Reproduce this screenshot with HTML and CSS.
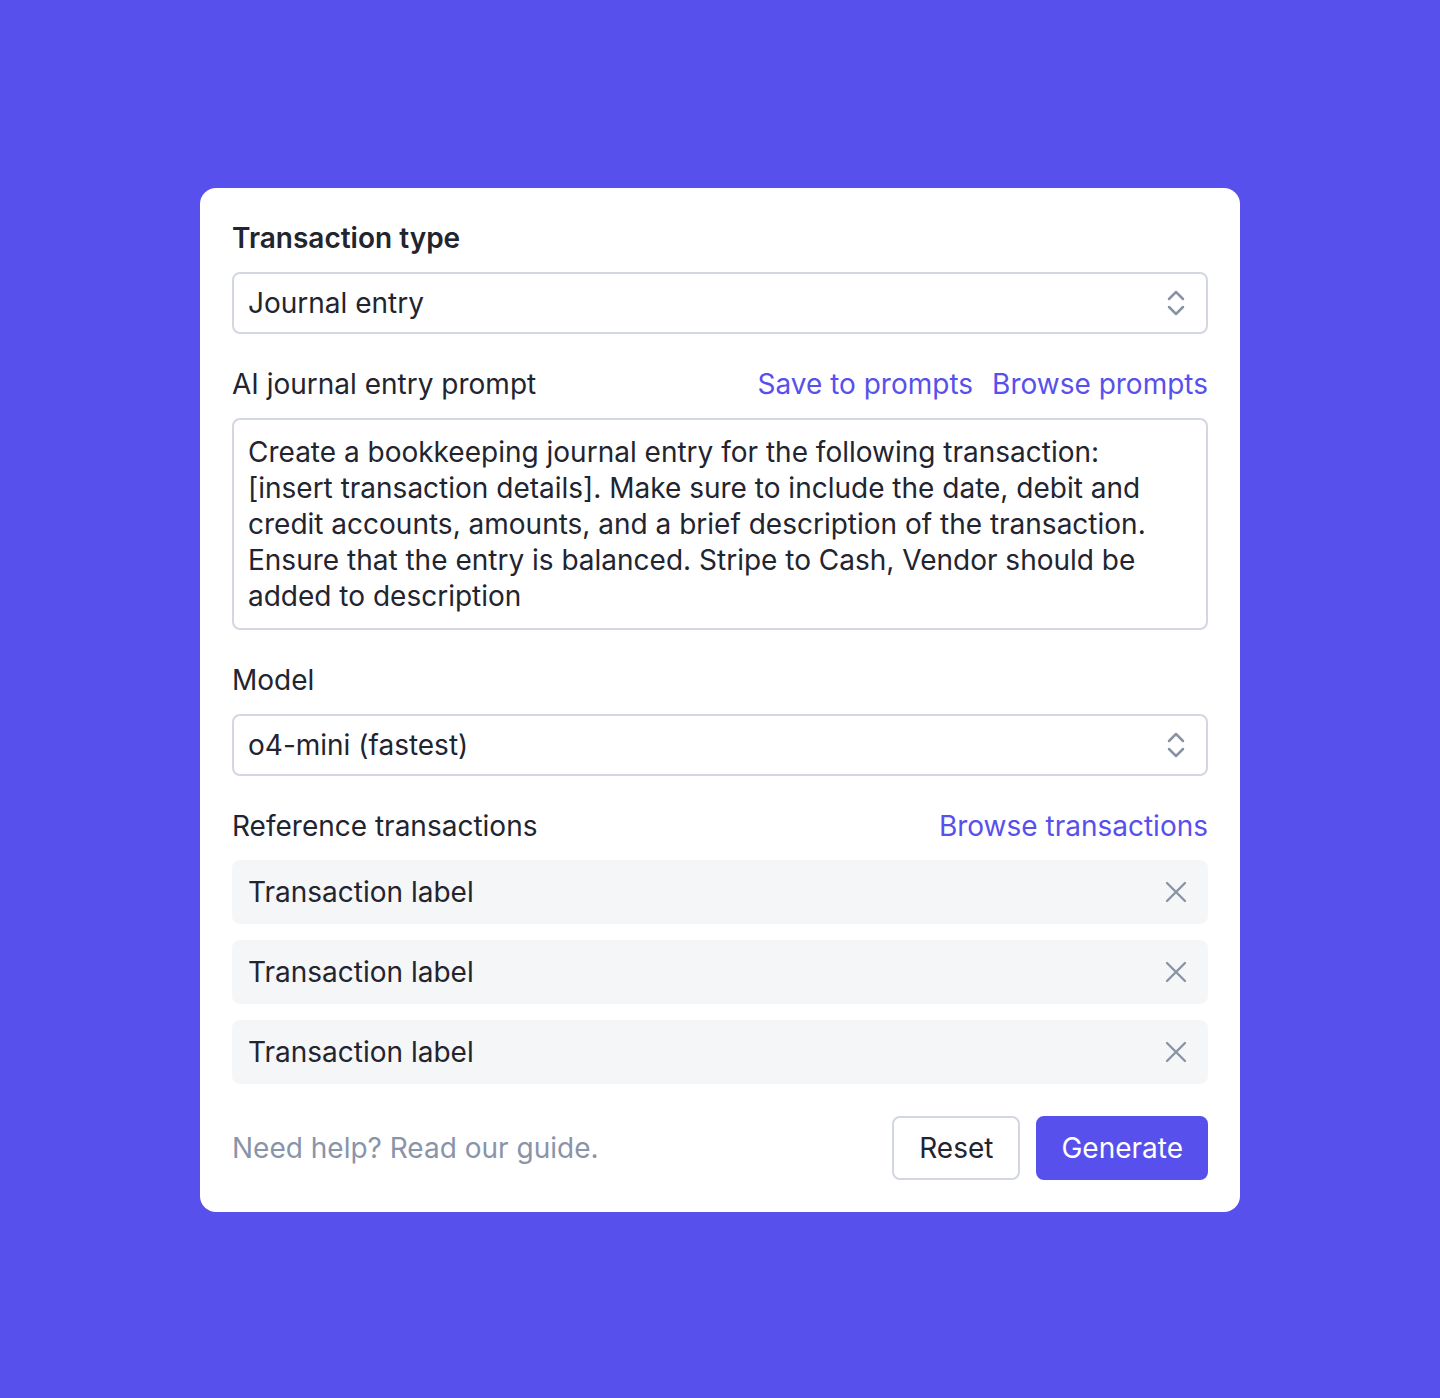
FILE: index.html
```html
<!DOCTYPE html>
<html lang="en">
<head>
<meta charset="utf-8">
<title>AI journal entry</title>
<link rel="stylesheet" href="styles.css">
</head>
<body>
<main class="page">
  <section class="card">
    <div class="group">
      <div class="title">Transaction type</div>
      <div class="select">
        <span>Journal entry</span>
        <svg class="chev" width="24" height="28" viewBox="0 0 24 28" fill="none" stroke="currentColor" stroke-width="2.5" stroke-linecap="round" stroke-linejoin="round"><path d="M5 10l7-7 7 7"/><path d="M5 18l7 7 7-7"/></svg>
      </div>
    </div>

    <div class="group">
      <div class="label-row">
        <span class="label">AI journal entry prompt</span>
        <span class="links"><a class="link" href="#">Save to prompts</a><a class="link" href="#">Browse prompts</a></span>
      </div>
      <div class="textarea">Create a bookkeeping journal entry for the following transaction: [insert transaction details]. Make sure to include the date, debit and credit accounts, amounts, and a brief description of the transaction. Ensure that the entry is balanced. Stripe to Cash, Vendor should be added to description</div>
    </div>

    <div class="group">
      <div class="label">Model</div>
      <div class="select">
        <span>o4-mini (fastest)</span>
        <svg class="chev" width="24" height="28" viewBox="0 0 24 28" fill="none" stroke="currentColor" stroke-width="2.5" stroke-linecap="round" stroke-linejoin="round"><path d="M5 10l7-7 7 7"/><path d="M5 18l7 7 7-7"/></svg>
      </div>
    </div>

    <div class="group">
      <div class="label-row">
        <span class="label">Reference transactions</span>
        <a class="link" href="#">Browse transactions</a>
      </div>
      <div class="rows">
        <div class="row"><span>Transaction label</span><svg class="x" width="24" height="24" viewBox="0 0 24 24" fill="none" stroke="currentColor" stroke-width="2.4" stroke-linecap="round"><path d="M3 3l18 18M21 3L3 21"/></svg></div>
        <div class="row"><span>Transaction label</span><svg class="x" width="24" height="24" viewBox="0 0 24 24" fill="none" stroke="currentColor" stroke-width="2.4" stroke-linecap="round"><path d="M3 3l18 18M21 3L3 21"/></svg></div>
        <div class="row"><span>Transaction label</span><svg class="x" width="24" height="24" viewBox="0 0 24 24" fill="none" stroke="currentColor" stroke-width="2.4" stroke-linecap="round"><path d="M3 3l18 18M21 3L3 21"/></svg></div>
      </div>
    </div>

    <div class="footer">
      <span class="help">Need help? Read our guide.</span>
      <div class="buttons">
        <button class="btn btn-secondary" type="button">Reset</button>
        <button class="btn btn-primary" type="button">Generate</button>
      </div>
    </div>
  </section>
</main>
</body>
</html>
```

FILE: styles.css
```css
* { box-sizing: border-box; }
html, body { margin: 0; padding: 0; }
body {
  background: #5850ec;
  font-family: Inter, "Noto Sans", "Liberation Sans", sans-serif;
  color: #22242f;
  font-size: 28px;
  line-height: 36px;
}
.page {
  min-height: 1398px;
  padding-top: 2px;
  display: flex;
  align-items: center;
  justify-content: center;
}
.card {
  width: 1040px;
  background: #ffffff;
  border-radius: 16px;
  padding: 32px;
  display: flex;
  flex-direction: column;
  gap: 32px;
}
.group {
  display: flex;
  flex-direction: column;
  gap: 16px;
}
.title {
  font-weight: 600;
  color: #22242f;
}
.label { color: #22242f; }
.label-row {
  display: flex;
  justify-content: space-between;
  align-items: center;
}
.links { display: flex; gap: 19px; }
.link {
  color: #5850ec;
  text-decoration: none;
}
.select {
  height: 62px;
  border: 2px solid #d3d7e1;
  border-radius: 8px;
  padding: 0 18px 0 14px;
  display: flex;
  align-items: center;
  justify-content: space-between;
}
.chev { color: #8a93a6; display: block; }
.textarea {
  border: 2px solid #d3d7e1;
  border-radius: 8px;
  padding: 14px 20px 14px 14px;
}
.rows {
  display: flex;
  flex-direction: column;
  gap: 16px;
}
.row {
  height: 64px;
  background: #f5f6f8;
  border-radius: 8px;
  padding: 0 20px 0 16px;
  display: flex;
  align-items: center;
  justify-content: space-between;
}
.x { color: #8a93a6; display: block; }
.footer {
  display: flex;
  justify-content: space-between;
  align-items: center;
}
.help { color: #8a94a9; }
.buttons { display: flex; gap: 16px; }
.btn {
  height: 64px;
  border-radius: 8px;
  font-family: inherit;
  font-size: 28px;
  line-height: 36px;
  cursor: pointer;
}
.btn-secondary {
  padding: 0 25px;
  background: #ffffff;
  border: 2px solid #d3d7e1;
  color: #22242f;
}
.btn-primary {
  padding: 0 23px;
  background: #5850ec;
  border: 2px solid #5850ec;
  color: #ffffff;
}
```
